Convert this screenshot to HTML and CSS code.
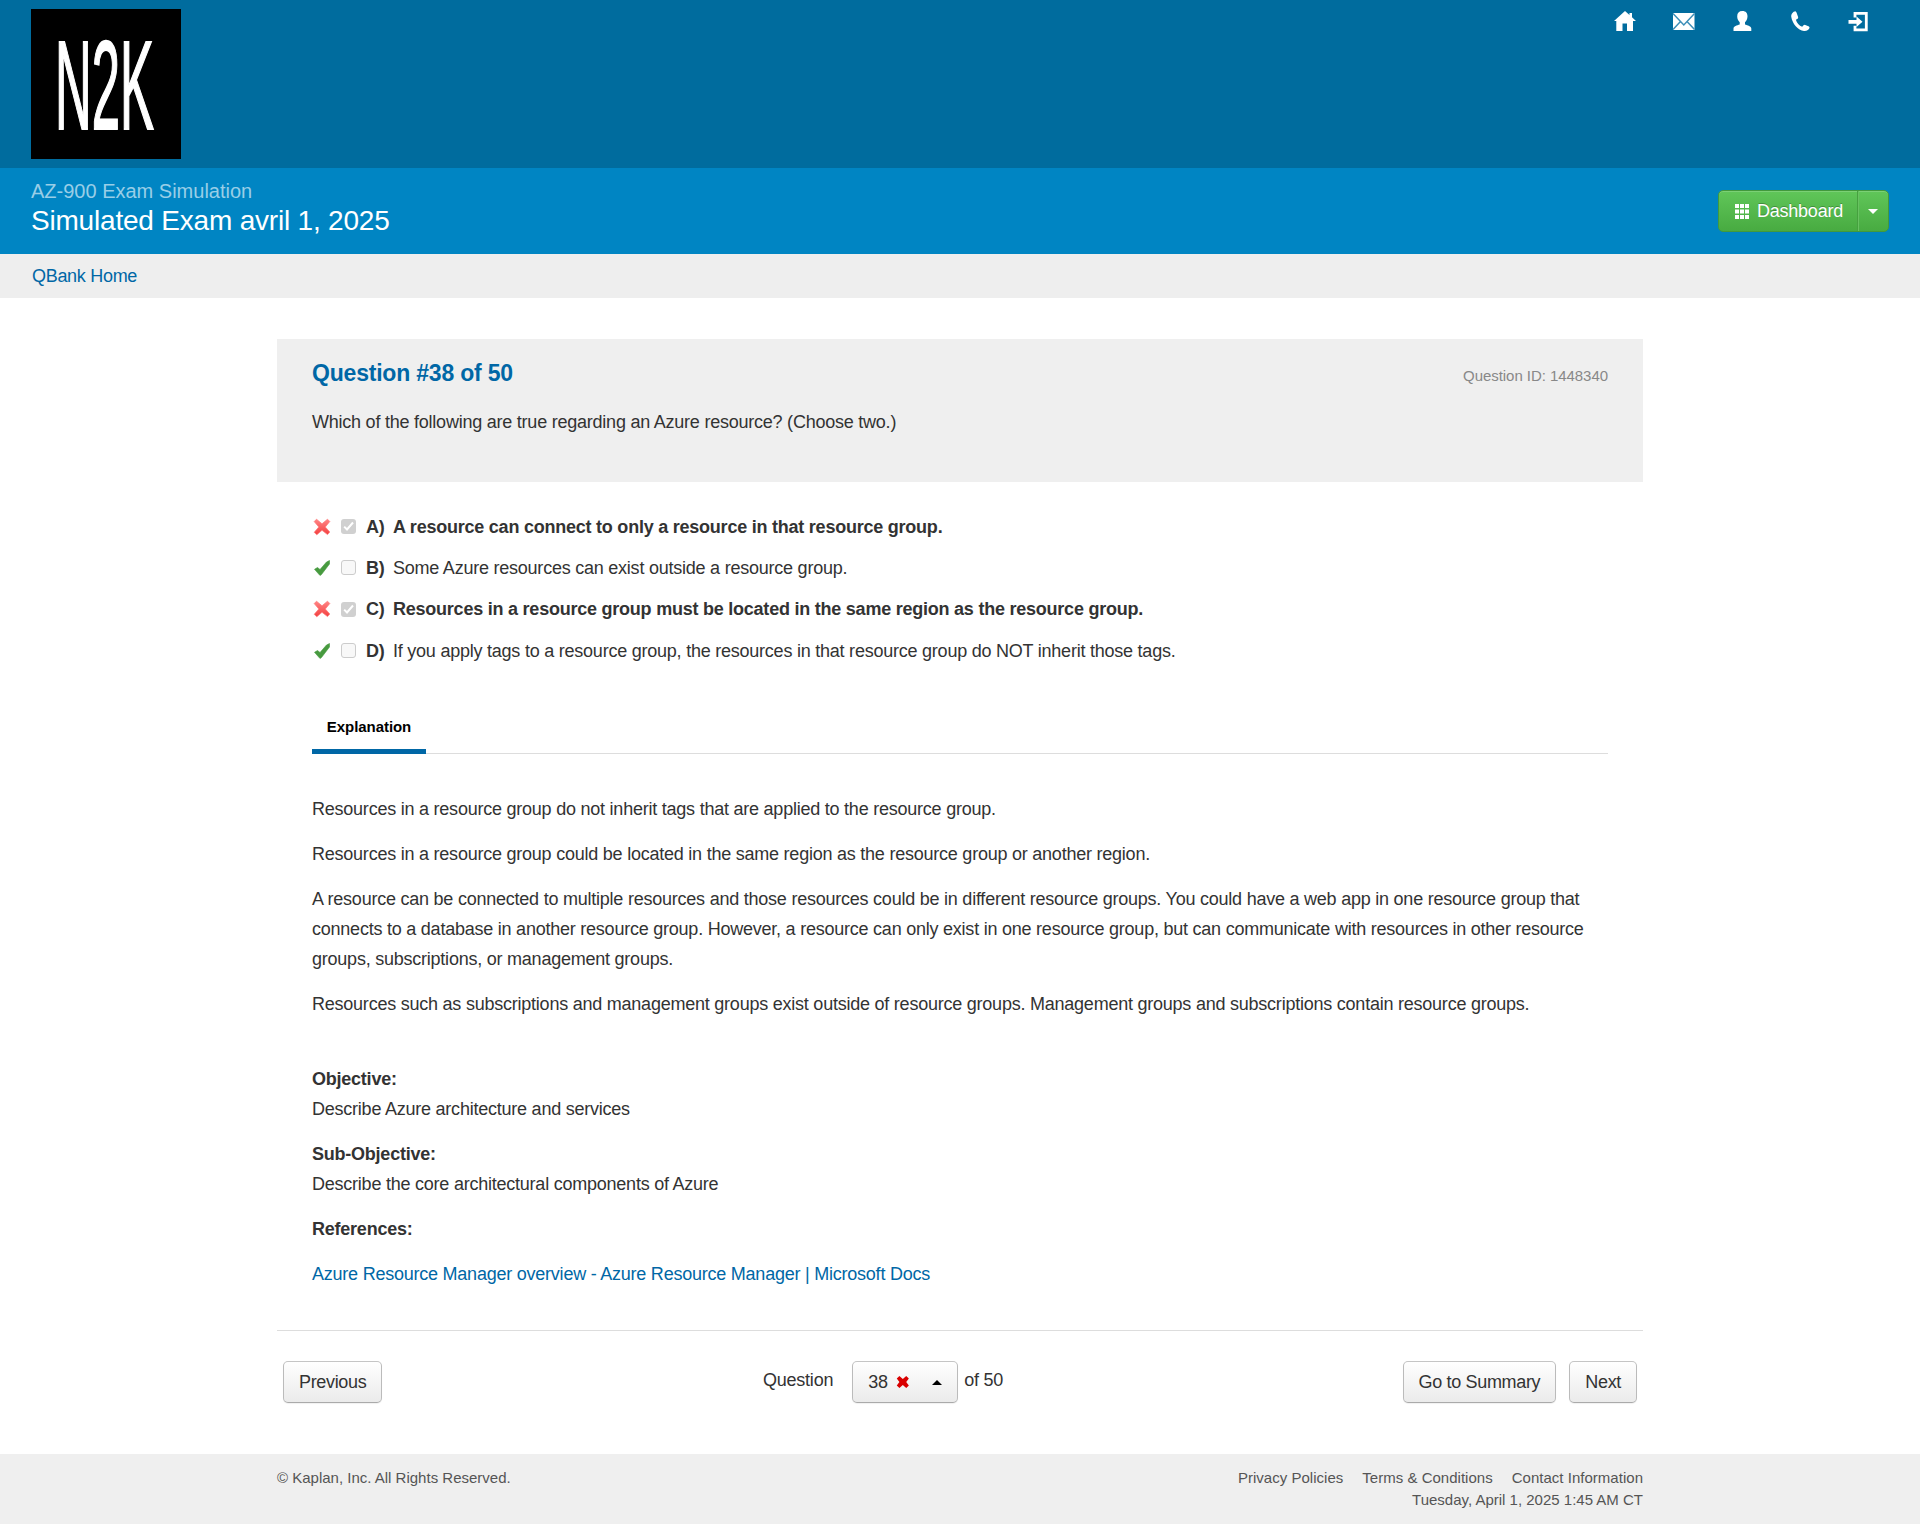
FILE: index.html
```html
<!DOCTYPE html>
<html lang="en">
<head>
<meta charset="utf-8">
<title>Simulated Exam</title>
<link rel="stylesheet" href="styles.css">
</head>
<body>
<svg class="defs" width="0" height="0">
  <defs>
    <linearGradient id="red" x1="0" y1="0" x2="0" y2="1"><stop offset="0" stop-color="#ff8585"/><stop offset="1" stop-color="#f33f3f"/></linearGradient>
    <symbol id="cross" viewBox="0 0 18 18"><path d="M3.5 1.2 9 5.8l5.500-4.600 2.300 2.300L12.300 9l4.500 5-2.300 2.600L9 12.300 3.800 16.800 1.200 14.300 5.800 9 1.200 3.600z" fill="url(#red)" stroke="#f77" stroke-width=".7" stroke-linejoin="round"/></symbol>
    <symbol id="tick" viewBox="0 0 18 18"><path d="M1.500 10.300 4.500 8.500 7 10.500 13.500 3 16.500 1.500V5L8.500 15.500 7 16.500z" fill="#479a3f" stroke="#479a3f" stroke-width=".6" stroke-linejoin="round"/></symbol>
  </defs>
</svg>
<header class="top">
  <svg class="logo" viewBox="0 0 150 150" width="150" height="150">
    <rect width="150" height="150"/>
    <text class="logo-text" transform="translate(24 120) scale(.4 1)">N2K</text>
  </svg>
  <nav class="icons">
    <svg width="24" height="22" viewBox="0 0 24 22"><path d="M12 1 1 11h2.300v10H9.500v-7.500h4.500V21h6V11H23l-4-3.800V3h-2.500v2z"/></svg>
    <svg width="24" height="22" viewBox="0 0 24 22"><path d="M1 3h21.500v17H1z"/><path class="seam" d="M1 3.500 11.800 15 22.500 3.500M1 19.500 8.500 11.500M22.500 19.500 15 11.500"/></svg>
    <svg width="24" height="22" viewBox="0 0 24 22"><path d="M12.300 1c3.700 0 5.200 2.200 5.200 5.300 0 3-1.300 4.700-2.500 5.900v2.300c2.500.8 6.300 1.800 6.300 4V21H3.500v-2.500c0-2.200 3.500-3.200 6.200-4v-2.300C8.300 11 7.200 9 7.200 6.300 7.200 3 9 1 12.300 1z"/></svg>
    <svg width="24" height="22" viewBox="0 0 24 22"><path d="M6.500 1.200C4 1.500 1.800 4 2.300 7c1 6.500 6.700 13.500 12.700 14 3 .2 5-1.200 5.600-3.200l-.6-1.200-4.300-1.800-1.200.4-1.300 1.600c-3-1-5.500-3.800-6.300-7l2-1.300.3-1.200-1.700-4.900z"/></svg>
    <svg width="24" height="22" viewBox="0 0 24 22"><path class="door" d="M8 7.500V3.400H19.300v16.400H8v-4"/><path d="M1.500 10h8V6.500l6 5.200-6 5.300v-3.300h-8z"/></svg>
  </nav>
</header>
<section class="title-bar">
  <div>
    <div class="course">AZ-900 Exam Simulation</div>
    <h1>Simulated Exam avril 1, 2025</h1>
  </div>
  <div class="dashboard">
    <button class="dash-main"><svg width="14" height="15" viewBox="0 0 14 15"><path d="M0 0h4v4H0zM5 0h4v4H5zM10 0h4v4h-4zM0 5.500h4v4H0zM5 5.500h4v4H5zM10 5.500h4v4h-4zM0 11h4v4H0zM5 11h4v4H5zM10 11h4v4h-4z"/></svg><span>Dashboard</span></button>
    <button class="dash-more"><i class="caret down"></i></button>
  </div>
</section>
<nav class="crumbs"><a>QBank Home</a></nav>
<main class="wrap">
  <section class="question">
    <div class="question-head"><h2>Question #38 of 50</h2><span class="qid">Question ID: 1448340</span></div>
    <p class="stem">Which of the following are true regarding an Azure resource? (Choose two.)</p>
  </section>
  <section class="body">
    <ul class="answers">
      <li><svg class="mark" width="18" height="18"><use href="#cross"/></svg><span class="box checked"><svg width="15" height="15" viewBox="0 0 15 15"><path d="M3.200 7.600 6 10.500 12 3.500"/></svg></span><b class="letter">A)</b><b>A resource can connect to only a resource in that resource group.</b></li>
      <li><svg class="mark" width="18" height="18"><use href="#tick"/></svg><span class="box"></span><b class="letter">B)</b><span>Some Azure resources can exist outside a resource group.</span></li>
      <li><svg class="mark" width="18" height="18"><use href="#cross"/></svg><span class="box checked"><svg width="15" height="15" viewBox="0 0 15 15"><path d="M3.200 7.600 6 10.500 12 3.500"/></svg></span><b class="letter">C)</b><b>Resources in a resource group must be located in the same region as the resource group.</b></li>
      <li><svg class="mark" width="18" height="18"><use href="#tick"/></svg><span class="box"></span><b class="letter">D)</b><span>If you apply tags to a resource group, the resources in that resource group do NOT inherit those tags.</span></li>
    </ul>
    <div class="tabs"><span class="tab">Explanation</span></div>
    <article class="explanation">
      <p>Resources in a resource group do not inherit tags that are applied to the resource group.</p>
      <p>Resources in a resource group could be located in the same region as the resource group or another region.</p>
      <p>A resource can be connected to multiple resources and those resources could be in different resource groups. You could have a web app in one resource group that<br>connects to a database in another resource group. However, a resource can only exist in one resource group, but can communicate with resources in other resource<br>groups, subscriptions, or management groups.</p>
      <p>Resources such as subscriptions and management groups exist outside of resource groups. Management groups and subscriptions contain resource groups.</p>
      <p class="objective"><b>Objective:</b><br>Describe Azure architecture and services</p>
      <p><b>Sub-Objective:</b><br>Describe the core architectural components of Azure</p>
      <p><b>References:</b></p>
      <p><a>Azure Resource Manager overview - Azure Resource Manager | Microsoft Docs</a></p>
    </article>
  </section>
  <section class="pager">
    <div class="side"><button class="btn">Previous</button></div>
    <div class="jump"><span class="jump-label">Question</span><button class="btn picker"><span>38</span><svg width="14" height="14" viewBox="0 0 14 14"><path d="M3.500.800 7 4l3.500-3.200 2.700 2.700L10.500 7l2.700 3.500-2.700 2.700L7 10.200l-3.500 3L.800 10.500 3.500 7 .800 3.500z"/></svg><i class="caret up"></i></button><span>of 50</span></div>
    <div class="end"><button class="btn">Go to Summary</button><button class="btn">Next</button></div>
  </section>
</main>
<footer class="footer">
  <div class="footer-in">
    <span>© Kaplan, Inc. All Rights Reserved.</span>
    <div class="legal"><div class="links"><a>Privacy Policies</a><a>Terms &amp; Conditions</a><a>Contact Information</a></div><div>Tuesday, April 1, 2025 1:45 AM CT</div></div>
  </div>
</footer>
</body>
</html>
```
FILE: styles.css
```css
* { box-sizing: border-box; }
body { margin: 0; background: #fff; color: #333; font: 18px/30px "Liberation Sans", Arial, sans-serif; letter-spacing: -.232px; }
h1, h2, p, ul { margin: 0; padding: 0; }
button { font: inherit; letter-spacing: inherit; color: inherit; margin: 0; }
a { color: #0067a6; }
.defs { display: block; height: 0; }
.top { height: 168px; background: #006c9e; display: flex; justify-content: space-between; align-items: flex-start; padding: 9px 49px 0 31px; }
.logo { display: block; }
.logo-text { font-size: 127px; letter-spacing: 0; fill: #fff; stroke: #fff; stroke-width: 1.5; vector-effect: non-scaling-stroke; }
.icons { display: flex; gap: 34.500px; padding-top: 1px; }
.icons svg { fill: #fff; display: block; }
.icons .seam { fill: none; stroke: #3d8fb8; stroke-width: 1.500; }
.icons .door { fill: none; stroke: #fff; stroke-width: 2.800; }
.title-bar { height: 86px; background: #0085c3; padding: 0 31px; display: flex; justify-content: space-between; }
.course { margin-top: 10px; font-size: 20px; line-height: 26px; color: #99cee7; letter-spacing: 0; }
h1 { color: #fff; font-size: 28px; line-height: 34px; font-weight: 400; letter-spacing: -.2px; }
.dashboard { display: flex; height: 42px; margin-top: 22px; border: 1px solid #42993c; border-radius: 5px; background: linear-gradient(#60c659, #48ab41); box-shadow: inset 0 1px 0 #7bd075; }
.dash-main, .dash-more { border: 0; background: none; color: #fff; display: flex; align-items: center; }
.dash-main { width: 138px; padding: 0 0 1px 16px; gap: 8px; text-shadow: 0 -1px 0 rgba(0,0,0,.25); }
.dash-main svg { fill: #fff; margin-top: 2px; }
.dash-more { width: 31px; padding: 0; justify-content: center; border-left: 1px solid #46a03f; box-shadow: inset 1px 0 0 #68c261; }
.caret { width: 0; height: 0; border-left: 5px solid transparent; border-right: 5px solid transparent; }
.down { border-top: 5px solid #fff; }
.up { border-bottom: 5px solid #000; margin-left: 23px; }
.crumbs { height: 44px; background: #eee; padding: 7px 32px; letter-spacing: -.3px; }
.wrap { width: 1366px; margin: 41px 0 0 277px; }
.question { height: 143px; background: #efefef; padding: 19px 35px 0; }
.question-head { display: flex; justify-content: space-between; align-items: baseline; }
h2 { color: #0067a6; font-size: 23px; line-height: 30px; letter-spacing: -.2px; }
.qid { font-size: 15px; color: #888; letter-spacing: -.05px; }
.stem { margin-top: 16px; }
.body { padding: 0 35px; }
.answers { list-style: none; padding-top: 24px; height: 212px; }
.answers li { display: flex; align-items: center; height: 41.300px; }
.mark { margin-left: 1px; }
.box { width: 15px; height: 15px; margin: 0 10px; border: 1px solid #ccc; border-radius: 3px; background: #f8f8f8; }
.checked { border: 0; background: #d0d0d0; }
.checked svg { display: block; fill: none; stroke: #fff; stroke-width: 2; }
.letter { width: 27px; }
.tabs { height: 60px; border-bottom: 1px solid #ddd; display: flex; }
.tab { height: 60px; width: 114px; border-bottom: 5px solid #0067a6; color: #000; font-weight: bold; font-size: 15px; line-height: 30px; text-align: center; padding-top: 18px; letter-spacing: -.05px; }
.explanation { padding-top: 40px; height: 576px; }
.explanation p { margin-bottom: 15px; }
.explanation .objective { padding-top: 30px; }
.pager { border-top: 1px solid #ddd; height: 124px; padding: 30px 6px 0; display: flex; align-items: flex-start; }
.side { width: 480px; }
.end { display: flex; gap: 13px; margin-left: auto; }
.btn { height: 42px; padding: 0 15px; border: 1px solid #bbb; border-color: #c5c5c5 #bbb #aaa; border-radius: 5px; background: linear-gradient(#fff, #ebebeb); box-shadow: 0 1px 1px rgba(0,0,0,.06); display: flex; align-items: center; letter-spacing: -.33px; }
.jump { display: flex; line-height: 38px; }
.jump-label { margin-right: 19px; }
.picker { width: 106px; margin-right: 6px; line-height: 30px; }
.picker svg { fill: #d90000; margin-left: 8px; }
.footer { height: 70px; background: #efefef; }
.footer-in { width: 1366px; margin-left: 277px; padding-top: 13px; display: flex; justify-content: space-between; font-size: 15px; line-height: 22px; color: #555; letter-spacing: 0; }
.footer a { color: inherit; }
.legal { text-align: right; }
.links { display: flex; gap: 19px; justify-content: flex-end; letter-spacing: .02px; }
```
